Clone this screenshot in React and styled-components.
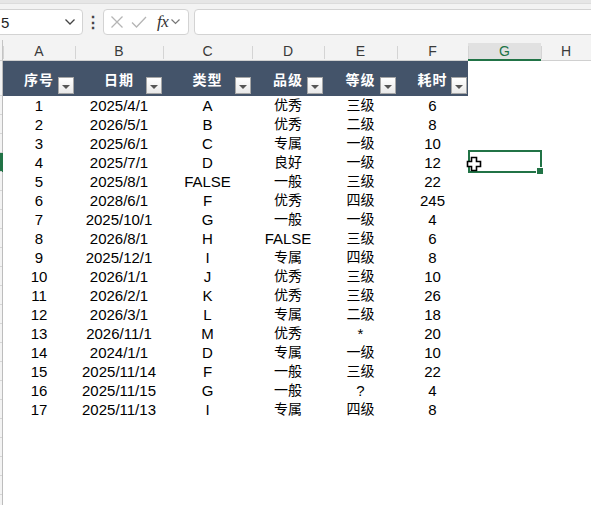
import React from 'react';
import styled, { createGlobalStyle, css } from 'styled-components';

const GlobalStyle = createGlobalStyle`
  html, body {
    margin: 0;
    padding: 0;
    background: #ffffff;
    overflow: hidden;
  }
  body {
    font-family: "Liberation Sans", "Noto Sans CJK SC", sans-serif;
  }
`;

const COLS = '3px 72px 88px 89px 72px 73px 71px 73px 1fr';
const LETTERS = ['A', 'B', 'C', 'D', 'E', 'F', 'G', 'H'];
const HEADERS = ['序号', '日期', '类型', '品级', '等级', '耗时'];

const rows = [
  ['1', '2025/4/1', 'A', '优秀', '三级', '6'],
  ['2', '2026/5/1', 'B', '优秀', '二级', '8'],
  ['3', '2025/6/1', 'C', '专属', '一级', '10'],
  ['4', '2025/7/1', 'D', '良好', '一级', '12'],
  ['5', '2025/8/1', 'FALSE', '一般', '三级', '22'],
  ['6', '2028/6/1', 'F', '优秀', '四级', '245'],
  ['7', '2025/10/1', 'G', '一般', '一级', '4'],
  ['8', '2026/8/1', 'H', 'FALSE', '三级', '6'],
  ['9', '2025/12/1', 'I', '专属', '四级', '8'],
  ['10', '2026/1/1', 'J', '优秀', '三级', '10'],
  ['11', '2026/2/1', 'K', '优秀', '三级', '26'],
  ['12', '2026/3/1', 'L', '专属', '二级', '18'],
  ['13', '2026/11/1', 'M', '优秀', '*', '20'],
  ['14', '2024/1/1', 'D', '专属', '一级', '10'],
  ['15', '2025/11/14', 'F', '一般', '三级', '22'],
  ['16', '2025/11/15', 'G', '一般', '?', '4'],
  ['17', '2025/11/13', 'I', '专属', '四级', '8'],
];

const isCjk = (s) => /[\u4e00-\u9fff]/.test(s);

const Page = styled.div`
  width: 591px;
  height: 505px;
  overflow: hidden;
  background: #f3f3f3;
`;

const TopStrip = styled.div`
  height: 3px;
  background: #e6e6e6;
  border-bottom: 1px solid #dcdcdc;
`;

const FormulaBar = styled.div`
  display: flex;
  align-items: center;
  height: 36px;
`;

const Box = styled.div`
  height: 26px;
  box-sizing: border-box;
  background: #ffffff;
  border: 1px solid #d3d3d3;
  border-radius: 4px;
  display: flex;
  align-items: center;
`;

const NameBox = styled(Box)`
  width: 88px;
  margin-left: -5px;
  padding: 0 0 0 5px;
  justify-content: space-between;
  font-size: 15px;
  color: #222;
`;

const Dots = styled.div`
  width: 20px;
  display: flex;
  justify-content: center;
  font-size: 16px;
  font-weight: bold;
  color: #444;
`;

const FuncBox = styled(Box)`
  width: 86px;
  padding: 0 0 0 6px;
  gap: 7px;
`;

const Fx = styled.span`
  font-family: "Liberation Serif", serif;
  font-style: italic;
  font-size: 17px;
  color: #333;
  margin-left: 3px;
  letter-spacing: -0.5px;
`;

const InputBox = styled(Box)`
  flex: 1;
  margin-left: 5px;
  margin-right: -6px;
`;

const Grid = styled.div`
  display: grid;
  grid-template-columns: ${COLS};
  grid-template-rows: ${(p) => p.$h}px;
  height: ${(p) => p.$h}px;
`;

const ColHeaderRow = styled(Grid)`
  background: #f3f3f3;
  border-bottom: 1px solid #d0d0d0;
  box-sizing: border-box;
`;

const ColLetter = styled.div`
  position: relative;
  margin-top: 3px;
  display: flex;
  align-items: center;
  justify-content: center;
  font-size: 14px;
  color: ${(p) => (p.$active ? '#217346' : '#3a3a3a')};
  background: ${(p) => (p.$active ? '#e1e1e1' : 'transparent')};
  border-bottom: 2px solid ${(p) => (p.$active ? '#217346' : 'transparent')};
  &::before {
    content: '';
    position: absolute;
    left: 0;
    bottom: 0;
    height: 13px;
    border-left: 1px solid #d4d4d4;
  }
`;

const Corner = styled.div`
  border-right: 1px solid #c4c4c4;
`;

const Sheet = styled.div`
  background: #ffffff;
`;

const RowHead = styled.div`
  background: #f3f3f3;
  border-right: 1px solid #bdbdbd;
  box-sizing: border-box;
  box-shadow: inset 0 -1px 0 #d6d6d6;
  ${(p) =>
    p.$active &&
    css`
      background: #217346;
      border-right-color: #217346;
    `}
`;

const TitleCell = styled.div`
  position: relative;
  background: #44546a;
  color: #ffffff;
  font-size: 14px;
  display: flex;
  align-items: center;
  justify-content: center;
  font-weight: bold;
  letter-spacing: 1px;
`;

const FilterButton = styled.div`
  position: absolute;
  right: 1px;
  bottom: 2px;
  width: 16px;
  height: 17px;
  box-sizing: border-box;
  border: 1px solid #a6a6a6;
  background: linear-gradient(#ffffff, #e9e9e9);
  display: flex;
  align-items: center;
  justify-content: center;
  &::after {
    content: '';
    margin-top: 2px;
    border-left: 4px solid transparent;
    border-right: 4px solid transparent;
    border-top: 4px solid #555;
  }
`;

const Cell = styled.div`
  position: relative;
  font-size: ${(p) => (p.$cjk ? '14px' : '15px')};
  line-height: 19px;
  text-align: center;
  color: #000;
  white-space: nowrap;
`;

const Selection = styled.div`
  position: absolute;
  left: 0;
  right: -1px;
  top: -3px;
  bottom: -1px;
  border: 2px solid #217346;
  pointer-events: none;
  &::after {
    content: '';
    position: absolute;
    right: -4px;
    bottom: -4px;
    width: 6px;
    height: 6px;
    background: #217346;
    border: 1px solid #fff;
  }
`;

const Cursor = styled.svg`
  position: absolute;
  left: -2px;
  top: 3px;
`;

const Chevron = ({ color = '#555' }) => (
  <svg width="12" height="8" viewBox="0 0 12 8" style={{ marginRight: 6 }}>
    <path d="M1.5 1.5 L6 6 L10.5 1.5" fill="none" stroke={color} strokeWidth="1.3" />
  </svg>
);

export default function App() {
  return (
    <Page>
      <GlobalStyle />
      <TopStrip />
      <FormulaBar>
        <NameBox>
          <span>5</span>
          <Chevron color="#444" />
        </NameBox>
        <Dots>⋮</Dots>
        <FuncBox>
          <svg width="14" height="14" viewBox="0 0 14 14">
            <path d="M1.5 1.5 L12.5 12.5 M12.5 1.5 L1.5 12.5" stroke="#b5b5b5" strokeWidth="1.3" />
          </svg>
          <svg width="16" height="14" viewBox="0 0 16 14">
            <path d="M1 7.5 L5.5 12 L15 2" fill="none" stroke="#b5b5b5" strokeWidth="1.3" />
          </svg>
          <Fx>fx</Fx>
          <svg width="11" height="8" viewBox="0 0 11 8" style={{ marginLeft: -5 }}>
            <path d="M1.5 1.5 L5.5 5.5 L9.5 1.5" fill="none" stroke="#777" strokeWidth="1.2" />
          </svg>
        </FuncBox>
        <InputBox />
      </FormulaBar>
      <ColHeaderRow $h={21}>
        <Corner />
        {LETTERS.map((l) => (
          <ColLetter key={l} $active={l === 'G'}>
            {l}
          </ColLetter>
        ))}
      </ColHeaderRow>
      <Sheet>
        <Grid $h={35}>
          <RowHead />
          {HEADERS.map((h) => (
            <TitleCell key={h}>
              {h}
              <FilterButton />
            </TitleCell>
          ))}
          <Cell />
          <Cell />
          <Cell />
        </Grid>
        {rows.map((r, i) => (
          <Grid $h={19} key={i}>
            <RowHead $active={i === 3} />
            {r.map((v, j) => (
              <Cell key={j} $cjk={isCjk(v)}>
                {v}
              </Cell>
            ))}
            <Cell>
              {i === 3 && (
                <>
                  <Selection />
                  <Cursor width="16" height="16" viewBox="0 0 16 16">
                    <path
                      d="M5.5 1.5 H10.5 V5.5 H14.5 V10.5 H10.5 V14.5 H5.5 V10.5 H1.5 V5.5 H5.5 Z"
                      fill="#fff"
                      stroke="#000"
                      strokeWidth="1.6"
                    />
                  </Cursor>
                </>
              )}
            </Cell>
            <Cell />
          </Grid>
        ))}
        {[0, 1, 2, 3, 4].map((k) => (
          <Grid $h={19} key={'e' + k}>
            <RowHead />
          </Grid>
        ))}
      </Sheet>
    </Page>
  );
}
